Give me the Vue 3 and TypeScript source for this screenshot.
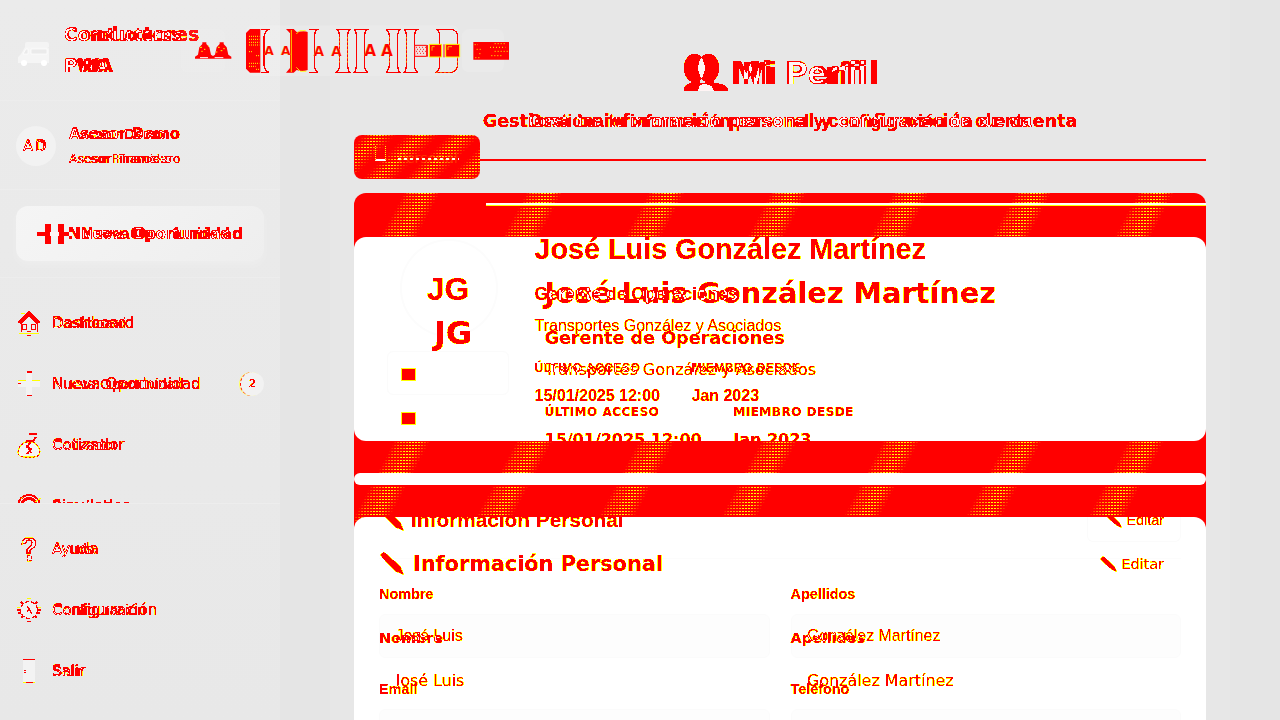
<script setup lang="ts">
interface NavItem {
  id: string
  label: string
  badge?: string
}

interface Field {
  label: string
  value: string
}

const mainNav: NavItem[] = [
  { id: 'home', label: 'Dashboard' },
  { id: 'plus', label: 'Nueva Oportunidad', badge: '2' },
  { id: 'money', label: 'Cotizador' },
  { id: 'target', label: 'Simulador' },
]

const footNav: NavItem[] = [
  { id: 'help', label: 'Ayuda' },
  { id: 'gear', label: 'Configuración' },
  { id: 'door', label: 'Salir' },
]

const fields: Field[] = [
  { label: 'Nombre', value: 'José Luis' },
  { label: 'Apellidos', value: 'González Martínez' },
  { label: 'Email', value: '' },
  { label: 'Teléfono', value: '' },
]

const layers = ['narrow', 'wide']
</script>

<template>
  <div class="page">
    <svg class="defs" width="0" height="0" aria-hidden="true">
      <!-- Red where one layer has ink, white where both do, yellow on soft edges -->
      <filter id="mark" x="-5%" y="-15%" width="110%" height="130%" color-interpolation-filters="sRGB">
        <feColorMatrix in="SourceGraphic" type="matrix" values="0 0 0 0 1  0 0 0 0 1  0 0 0 0 0  0 0 0 1 0" />
        <feComponentTransfer result="edge">
          <feFuncA type="discrete" tableValues="0 1 1 1 1 1 1 1 1 1 1 1 1 1 1" />
        </feComponentTransfer>
        <feColorMatrix in="SourceGraphic" type="matrix" values="1 0 1 0 0  1 0 1 0 -1  1 0 1 0 -1  0 0 0 1 0" />
        <feComponentTransfer result="core">
          <feFuncG type="discrete" tableValues="0 0 0 0.96" />
          <feFuncB type="discrete" tableValues="0 0 0 0.96" />
          <feFuncA type="discrete" tableValues="0 0 0 1 1" />
        </feComponentTransfer>
        <feMerge>
          <feMergeNode in="edge" />
          <feMergeNode in="core" />
        </feMerge>
      </filter>
      <!-- Heavier ink for the low-contrast side column and heading -->
      <filter id="mark-heavy" x="-5%" y="-15%" width="110%" height="130%" color-interpolation-filters="sRGB">
        <feColorMatrix in="SourceGraphic" type="matrix" values="0 0 0 0 1  0 0 0 0 1  0 0 0 0 0  0 0 0 1 0" />
        <feComponentTransfer result="edge">
          <feFuncA type="discrete" tableValues="0 0 1 1 1 1 1 1 1 1" />
        </feComponentTransfer>
        <feColorMatrix in="SourceGraphic" type="matrix" values="1 0 1 0 0  1 0 1 0 -1  1 0 1 0 -1  0 0 0 1 0" />
        <feComponentTransfer result="core">
          <feFuncG type="discrete" tableValues="0 0 0 0 0.96" />
          <feFuncB type="discrete" tableValues="0 0 0 0 0.96" />
          <feFuncA type="discrete" tableValues="0 0 0 1 1 1 1 1 1 1" />
        </feComponentTransfer>
        <feMerge>
          <feMergeNode in="edge" />
          <feMergeNode in="core" />
        </feMerge>
      </filter>
    </svg>

    <aside class="sidebar">
      <header class="brand">
        <svg class="van" width="34" height="26" viewBox="0 0 34 26">
          <path d="M8 3q0-2 2-2h20q2 0 2 2v3H8z" fill="#f4f4f4" />
          <path d="M8 6h22q2 0 2 2v14H1v-6l3-3z" fill="#f5f5f5" />
          <path d="M9 8l-3 5h5V8zM14 8h16v5H14z" fill="#eaeaea" stroke="#fff" stroke-width=".7" />
          <circle cx="7" cy="22" r="3" fill="#fff" /><circle cx="27" cy="22" r="3" fill="#fff" />
        </svg>
        <div class="duo brand-name">
          <span v-for="l in layers" :key="l" :class="l">Conductores<br />PWA</span>
        </div>
      </header>

      <section class="user">
        <div class="avatar">
          <div class="duo initials"><span v-for="l in layers" :key="l" :class="l">AD</span></div>
        </div>
        <div class="who">
          <div class="duo user-name"><span v-for="l in layers" :key="l" :class="l">Asesor Demo</span></div>
          <div class="duo user-role"><span v-for="l in layers" :key="l" :class="l">Asesor Financiero</span></div>
        </div>
      </section>

      <section class="action">
        <div class="action-btn">
          <div class="duo centered action-label">
            <span v-for="l in layers" :key="l" :class="l">
              <svg width="22" height="22" viewBox="0 0 22 22"><path d="M8 1h6v8h8v4h-8v8H8v-8H0V9h8z" fill="currentColor" /></svg>
              Nueva Oportunidad
            </span>
          </div>
        </div>
      </section>

      <template v-for="(group, g) in [mainNav, footNav]" :key="g">
        <nav class="nav" :class="g === 0 ? 'nav-main' : 'nav-foot'">
          <div v-for="item in group" :key="item.id" class="nav-item">
            <svg class="icon" width="24" height="26" viewBox="0 0 24 26" shape-rendering="crispEdges">
              <g v-if="item.id === 'home'">
                <path d="M4 12v12h16V12l-8-8z" fill="#eee" />
                <path d="M4 3h4M8 8l4-4 4 4M2 23.500h20" fill="none" stroke="#ff0" />
                <path d="M1 13L12 2l11 11M3 14l9-9 9 9" fill="none" stroke="#f00" stroke-width="1.500" />
                <path d="M5.500 14.500h4v5h-4zM14.500 14.500h4v5h-4zM4 14v8M20 14v8M10 21.500h4M10 25h4" fill="none" stroke="#f00" />
              </g>
              <g v-else-if="item.id === 'plus'">
                <path d="M9 1h6v9h8v6h-8v9H9v-9H1v-6h8z" fill="#f3f3f3" />
                <path d="M1 9.500h8M15 9.500h8" stroke="#ff0" />
                <path d="M9.500 1h5M9.500 24.500h5M1 12.500h3" stroke="#f00" stroke-width="1.500" />
              </g>
              <g v-else-if="item.id === 'money'">
                <path d="M8 10h8c5 3 7 7 7 10q-1 5-6 5H7q-6 0-6-5 0-5 7-10z" fill="#f6f6f6" stroke="#ff0" stroke-width="1.300" />
                <path d="M8 10h8c5 3 7 7 7 10q-1 5-6 5H7q-6 0-6-5 0-5 7-10z" fill="none" stroke="#f00" stroke-dasharray="2 2" />
                <path d="M12 2h8M19 5l-3 4H9M13 11l-3 4 4 2-4 5M10 13l4 8" fill="none" stroke="#f00" stroke-width="2" />
              </g>
              <g v-else-if="item.id === 'target'">
                <circle cx="12" cy="13" r="11" fill="#eee" stroke="#f00" stroke-width="2" />
                <circle cx="12" cy="13" r="7.500" fill="none" stroke="#f00" stroke-width="3" />
                <path d="M18 9l6-4M4 6l2-2" stroke="#ff0" />
              </g>
              <g v-else-if="item.id === 'help'">
                <path d="M5 8q0-6 7-6t7 5q0 4-6 7v3h-3v-4q5-3 5-6 0-3-3-3t-3 3z" fill="#f0f0f0" stroke="#f00" stroke-width="1.200" />
                <path d="M8 1.500h8M5 5v4M13 18h-3M10 25.500h4" fill="none" stroke="#ff0" />
                <path d="M10 19.500h4v5h-4z" fill="#f0f0f0" stroke="#f00" stroke-dasharray="3 1" />
              </g>
              <g v-else-if="item.id === 'gear'">
                <circle cx="12" cy="13" r="8.500" fill="#f2f2f2" stroke="#f00" stroke-width="1.200" stroke-dasharray="4 2" />
                <path d="M0 13h4M20 13h4M1 16h3M20 16h3M4 5l2 2M20 5l-2 2M4 21l2-2M20 21l-2-2" stroke="#f00" stroke-width="1.500" />
                <path d="M10 1.500h4M0 10.500h3M21 10.500h3" stroke="#ff0" />
                <path d="M10 24.500h4M10 9l5 8M13 11l-3 4" stroke="#f00" stroke-width="1.300" />
              </g>
              <g v-else>
                <path d="M6 1h12v24H6z" fill="#f3f3f3" />
                <path d="M6 1.500h12M9 24.500h7" stroke="#f00" stroke-width="1.500" />
                <path d="M6 24.500h3M16 24.500h2" stroke="#ff0" />
                <path d="M7 12h2M7 14.500h2" stroke="#f00" />
              </g>
            </svg>
            <div class="duo nav-label"><span v-for="l in layers" :key="l" :class="l">{{ item.label }}</span></div>
            <div v-if="item.badge" class="badge">
              <div class="duo badge-text"><span v-for="l in layers" :key="l" :class="l">{{ item.badge }}</span></div>
            </div>
          </div>
        </nav>
      </template>
    </aside>

    <main class="content">
      <h1 class="duo centered title">
        <span v-for="l in layers" :key="l" :class="l">
          <svg width="38" height="38" viewBox="0 0 38 38"><ellipse cx="14.500" cy="14" rx="10.500" ry="14" fill="currentColor" /><path d="M4 37q0-7 7-8l1-4h7l1 4q14 1 14 8z" fill="currentColor" /></svg>
          Mi Perfil
        </span>
      </h1>
      <p class="duo centered subtitle">
        <span v-for="l in layers" :key="l" :class="l">Gestiona tu información personal y configuración de cuenta</span>
      </p>

      <div class="tabs">
        <div class="tab noise">
          <i class="tab-icon"></i>
          <span class="tab-label">Personal</span>
        </div>
        <div class="tab-line"></div>
      </div>

      <div class="cards noise">
        <div class="rule"></div>
        <section class="panel profile">
          <div class="faint-circle"></div>
          <div class="faint-button"></div>
          <div class="stack">
            <div v-for="l in layers" :key="l" class="profile-row" :class="l">
              <div class="photo">
                <div class="big-initials">JG</div>
                <i class="camera"></i>
              </div>
              <div class="info">
                <div class="name">José Luis González Martínez</div>
                <div class="job">Gerente de Operaciones</div>
                <div class="company">Transportes González y Asociados</div>
                <div class="meta">
                  <div><div class="meta-label">ÚLTIMO ACCESO</div><div class="meta-value">15/01/2025 12:00</div></div>
                  <div><div class="meta-label">MIEMBRO DESDE</div><div class="meta-value">Jan 2023</div></div>
                </div>
              </div>
            </div>
          </div>
        </section>
        <div class="panel strip"></div>
        <section class="panel form">
          <div class="stack">
            <div v-for="l in layers" :key="l" class="form-body" :class="l">
              <div class="form-head">
                <div class="form-title">
                  <svg width="26" height="26" viewBox="0 0 26 26"><path d="M1 4l4-3 16 14 4 9-9-4z" fill="currentColor" /></svg>
                  <span>Información Personal</span>
                </div>
                <div class="edit">
                  <svg width="17" height="17" viewBox="0 0 17 17"><path d="M0 3l3-3 11 10 3 6-6-3z" fill="currentColor" /></svg>
                  <span>Editar</span>
                </div>
              </div>
              <div class="fields">
                <div v-for="f in fields" :key="f.label" class="field">
                  <div class="field-label">{{ f.label }}</div>
                  <div class="field-value">{{ f.value }}</div>
                </div>
              </div>
            </div>
          </div>
          <div class="form-ghost">
            <div class="ghost-head"><div class="ghost-edit"></div></div>
            <div class="ghost-fields"><i></i><i></i><i></i><i></i></div>
          </div>
        </section>
      </div>
    </main>

    <svg class="toolbar" width="340" height="80" viewBox="0 0 1020 240">
      <rect x="2" y="57" width="134" height="130" rx="22" fill="#fff" fill-opacity=".08" />
      <rect x="198" y="46" width="638" height="152" rx="20" fill="#fff" fill-opacity=".15" />
      <rect x="845" y="57" width="127" height="130" rx="22" fill="#fff" fill-opacity=".12" />
      <path d="M45 146v-6l9-6 4-22 9-10v-5h12v5l9 10 5 22 6 4 6-4 5-22 9-10v-5h12v5l9 10 5 22 9 6v6z" fill="#f00" />
      <path d="M60 112h6M72 118h4M64 124h4M84 108h3M114 112h5M122 122h5M130 116h4M108 126h4" stroke="#ff0" stroke-width="3" />
      <path d="M60 143h24M104 143h26" stroke="#fff" stroke-width="3" />
      <path d="M210 57h31v131h-31l-12-12V69z" fill="#f00" />
      <path d="M207 79h31M207 88h31M207 97h31M207 105h31M207 125h12M228 137h12M207 160h31M207 169h20M228 178h12" stroke="#ff0" stroke-width="3" stroke-dasharray="3 3" />
      <path d="M318 57h23l9 9q25-4 33 0v114q-16 6-33 0l-9 8h-23l12-14V70z" fill="#f00" />
      <path d="M334 60v126M349 72l10-10h18M349 172l12 12h18" fill="none" stroke="#ff0" stroke-width="2.500" />
      <path
        d="M242 58h24q-14 8-14 24v80q0 18 14 25h-24M387 58h26q-10 6-10 24v80q0 20 10 25h-26M469 58h40q-6 4-6 24v80q0 20 6 25h-40q10-6 10-25V82q0-18-10-24M523 58h40q-10 6-10 24v80q0 20 10 25h-40q6-6 6-25V82q0-20-6-24M617 58h43q-7 6-7 24v80q0 20 7 25h-43q11-6 11-25V82q0-20-11-24M673 58h40q-10 6-10 24v80q0 20 10 25h-40q6-6 6-25V82q0-20-6-24M769 58h46q18 4 18 24v80q0 20-18 25h-46q10-6 10-25V82q0-20-10-24"
        fill="none" stroke="#f00" stroke-width="4" shape-rendering="crispEdges"
      />
      <path d="M479 82v80M503 82v80M628 82v80M679 82v80M833 142v30l-18 15h-46" fill="none" stroke="#ff0" stroke-width="3" stroke-dasharray="3 9" />
      <g class="letters">
        <text x="253" y="136" font-size="37">A</text><text x="303" y="136" font-size="37">A</text>
        <text x="401" y="137" font-size="40">A</text><text x="454" y="137" font-size="40">A</text>
        <text x="553" y="137" font-size="46">A</text><text x="603" y="137" font-size="46">A</text>
      </g>
      <path d="M704 106h36v33h-36z" fill="#f3dede" stroke="#f00" stroke-width="3" />
      <path d="M708 112h30M711 118h27M708 124h30M711 130h27" stroke="#f00" stroke-width="2.500" stroke-dasharray="3 6" />
      <path d="M748 103h37v38h-37zM797 103h42v38h-42z" fill="#f00" stroke="#ff0" stroke-width="3" />
      <path d="M756 122v-12h8M804 120v-10h12" fill="none" stroke="#ff0" stroke-width="2" />
      <path d="M742 105v35M792 103v39" stroke="#f00" stroke-width="3" />
      <path d="M880 96h107v53H880z" fill="#f00" />
      <path d="M884 104h10M944 101h36M930 112h46M890 118h12M944 124h40M898 131h8M934 137h30M886 143h12" stroke="#ff0" stroke-width="3" stroke-dasharray="3 6" />
    </svg>
  </div>
</template>

<style>
html,
body {
  background: #e7e7e7;
  overflow: hidden;
}
</style>

<style scoped>
.page {
  position: relative;
  display: flex;
  width: 1280px;
  height: 720px;
  overflow: hidden;
  background: linear-gradient(90deg, #e5e5e5 0 330px, #e7e7e7 330px 1230px, #e5e5e5 1230px);
  font-family: 'Liberation Sans', sans-serif;
}
.defs {
  position: absolute;
}

/* Two type layers drawn on one another */
.duo,
.stack {
  display: grid;
  filter: url(#mark);
}
.duo {
  filter: url(#mark-heavy);
}
.duo > *,
.stack > * {
  grid-area: 1 / 1;
  white-space: nowrap;
}
.centered {
  justify-items: center;
}
.narrow {
  color: #f00;
  font-family: 'Liberation Sans', sans-serif;
}
.wide {
  color: #00f;
  font-family: 'DejaVu Sans', sans-serif;
  mix-blend-mode: screen;
}

.sidebar {
  flex: none;
  width: 280px;
  box-sizing: border-box;
  display: flex;
  flex-direction: column;
  background: linear-gradient(#ebebeb, #e8e8e8);
}
.brand {
  display: flex;
  align-items: center;
  height: 101px;
  padding-left: 17px;
  box-sizing: border-box;
  border-bottom: 1px solid #ededed;
}
.van {
  margin-top: 7px;
}
.brand-name {
  margin: 0 0 0 13px;
  font-size: 19.1px;
  line-height: 31px;
  font-weight: 700;
}
.user {
  display: flex;
  align-items: center;
  height: 89px;
  padding-left: 16px;
  box-sizing: border-box;
  border-bottom: 1px solid #ededed;
}
.avatar {
  width: 40px;
  height: 40px;
  margin-top: 2px;
  border-radius: 50%;
  background: #f2f2f2;
  display: grid;
  place-items: center;
}
.initials {
  font-size: 15px;
  font-weight: 400;
  letter-spacing: 2px;
}
.who {
  margin-left: 13px;
}
.user-name {
  font-size: 15px;
  line-height: 24px;
  font-weight: 700;
}
.user-role {
  font-size: 12.7px;
  line-height: 20px;
  margin-top: 3px;
}
.action {
  height: 88px;
  padding: 16px;
  box-sizing: border-box;
  border-bottom: 1px solid #ededed;
}
.action-btn {
  display: grid;
  align-items: center;
  height: 55px;
  border-radius: 12px;
  background: linear-gradient(135deg, #f5f5f5, #eee);
  box-shadow: 0 4px 10px rgba(255, 255, 255, 0.2);
}
.action-label {
  font-size: 16px;
  font-weight: 700;
}
.action-label > span {
  display: flex;
  align-items: center;
  gap: 9px;
}
.nav {
  box-sizing: border-box;
  overflow: hidden;
}
.nav-main {
  height: 226px;
  padding-top: 14px;
  border-bottom: 1px solid #ededed;
}
.nav-foot {
  padding-top: 14px;
}
.nav-item {
  display: flex;
  align-items: center;
  height: 61px;
  padding: 0 16px 0 17px;
}
.icon {
  flex: none;
}
.nav-label {
  margin-left: 11px;
  font-size: 15.2px;
  line-height: 24px;
}
.badge {
  margin-left: auto;
  width: 24px;
  height: 24px;
  box-sizing: border-box;
  border-radius: 50%;
  border-left: 1px dashed #f00;
  background: #f2f2f2;
  box-shadow: -1px 0 0 #ff6;
  display: grid;
  place-items: center;
}
.badge-text {
  font-size: 11px;
}

.content {
  flex: 1;
  display: flex;
  flex-direction: column;
  padding: 48px 74px 0;
}
.title {
  margin: 0;
  height: 50px;
  font-size: 32px;
  line-height: 50px;
  font-weight: 700;
}
.title > span {
  display: flex;
  align-items: center;
  gap: 12px;
}
.title > .narrow {
  gap: 10px;
}
.subtitle {
  margin: 9px 0 0;
  font-size: 17.6px;
  line-height: 28px;
  font-weight: 700;
}
.tabs {
  display: flex;
  align-items: center;
}
.noise {
  background:
    repeating-linear-gradient(118deg, #f00 0 44px, rgba(255, 0, 0, 0.35) 50px 56px, rgba(255, 0, 0, 0) 58px 66px, #f00 76px 108px),
    conic-gradient(from 90deg at 1px 1px, #f00 270deg, #ff0 0) 0 0 / 3px 3px;
}
.tab {
  display: flex;
  align-items: center;
  width: 126px;
  height: 44px;
  padding-left: 21px;
  box-sizing: border-box;
  border-radius: 8px;
}
.tab.noise {
  background:
    repeating-linear-gradient(135deg, #f00 0 7px, rgba(255, 0, 0, 0) 16px 19px, #f00 30px),
    conic-gradient(from 90deg at 1px 1px, #f00 270deg, #ff0 0) 0 0 / 3px 3px;
}
.tab-icon {
  width: 9px;
  height: 13px;
  margin-bottom: 8px;
  border: 1px dotted #ff0;
  border-bottom: 2px solid #fff;
  border-top: 0;
}
.tab-label {
  margin: 1px 0 0 12px;
  padding-right: 1px;
  font: 14.4px/16px 'DejaVu Sans', sans-serif;
  letter-spacing: -0.2px;
  color: rgba(255, 255, 0, 0.2);
  background: repeating-linear-gradient(90deg, #fff 0 3px, transparent 3px 6px) 0 8px / 100% 2px no-repeat;
}
.tab-line {
  flex: 1;
  height: 2px;
  margin-top: 6px;
  background: #f00;
}
.cards {
  display: flex;
  flex-direction: column;
  flex: 1;
  margin-top: 14px;
  border-radius: 12px 12px 0 0;
}
.rule {
  height: 2px;
  margin: 10px 0 31px 132px;
  background: #fff;
  border-bottom: 1px solid #ff0;
}
.panel {
  background: #fff;
  border-radius: 12px;
  overflow: hidden;
}
.profile {
  position: relative;
  height: 204px;
  margin-bottom: 32px;
}
.faint-circle {
  position: absolute;
  left: 46px;
  top: 2px;
  width: 94px;
  height: 94px;
  border: 2px solid #fcfcfc;
  border-radius: 50%;
}
.faint-button {
  position: absolute;
  left: 33px;
  top: 114px;
  width: 120px;
  height: 42px;
  border: 1px solid #fbfbfb;
  border-radius: 6px;
}
.profile .stack {
  height: 204px;
}
.profile-row {
  display: flex;
  padding-left: 33px;
  font-weight: 700;
}
.profile-row.wide {
  margin-top: 44px;
}
.photo {
  width: 122px;
  margin-right: 25.5px;
  font-size: 32px;
  text-align: center;
}
.wide .photo {
  width: 132px;
}
.big-initials {
  margin-top: 32px;
  line-height: 40px;
}
.camera {
  display: block;
  width: 13px;
  height: 11px;
  margin: 60px 0 0 15px;
  background: currentColor;
  box-shadow: 0 0 0 1px rgba(255, 0, 0, 0.2);
}
.name {
  margin-top: -6px;
  font-size: 28.75px;
  line-height: 36px;
}
.job {
  margin-top: 13px;
  font-size: 17.6px;
  line-height: 28px;
}
.company {
  margin-top: 5px;
  font-size: 16px;
  line-height: 26px;
  font-weight: 400;
}
.meta {
  display: flex;
  gap: 31.5px;
  margin-top: 19px;
}
.meta-label {
  font-size: 12px;
  line-height: 20px;
  letter-spacing: 0.5px;
}
.meta-value {
  margin-top: 5px;
  font-size: 16px;
  line-height: 26px;
}
.strip {
  height: 12px;
  margin-bottom: 32px;
}
.form {
  position: relative;
  flex: none;
  height: 203px;
  border-radius: 12px 12px 0 0;
}
.form .stack {
  position: relative;
  z-index: 1;
  height: 203px;
}
.form-body {
  padding: 0 25px;
}
.form-body.wide {
  margin-top: 44px;
}
.form-head {
  display: flex;
  justify-content: space-between;
  align-items: center;
  height: 28px;
  margin-top: -11px;
}
.form-title {
  display: flex;
  align-items: center;
  gap: 6px;
  font-size: 20.8px;
  font-weight: 700;
}
.wide .form-title {
  gap: 8px;
}
.edit {
  display: flex;
  align-items: center;
  gap: 4px;
  margin-right: 17px;
  font-size: 14.4px;
}
.fields {
  display: grid;
  grid-template-columns: 1fr 1fr;
  gap: 21px;
  margin-top: 50px;
}
.field-label {
  font-size: 14.4px;
  line-height: 20px;
  font-weight: 700;
}
.field-value {
  height: 44px;
  margin-top: 10px;
  padding-left: 16.5px;
  font-size: 15.9px;
  line-height: 44px;
}
.wide .field-value {
  line-height: 46px;
}
.form-ghost {
  position: absolute;
  inset: 0;
  padding: 0 25px;
}
.ghost-head {
  height: 41px;
  border-bottom: 1px solid #fcfcfc;
}
.ghost-edit {
  width: 92px;
  height: 24px;
  margin-left: auto;
  border: 1px solid #fbfbfb;
  border-top: 0;
  border-radius: 0 0 6px 6px;
}
.ghost-fields {
  display: grid;
  grid-template-columns: 1fr 1fr;
  gap: 51px 21px;
  margin-top: 55px;
}
.ghost-fields i {
  height: 42px;
  border: 1px solid #fbfbfb;
  border-radius: 6px;
  background: #fdfdfd;
}
.toolbar {
  position: absolute;
  left: 180px;
  top: 10px;
}
.letters {
  fill: #f00;
  stroke: #ff0;
  stroke-width: 0.5px;
  font-family: 'DejaVu Sans', sans-serif;
  font-weight: 700;
}
</style>
